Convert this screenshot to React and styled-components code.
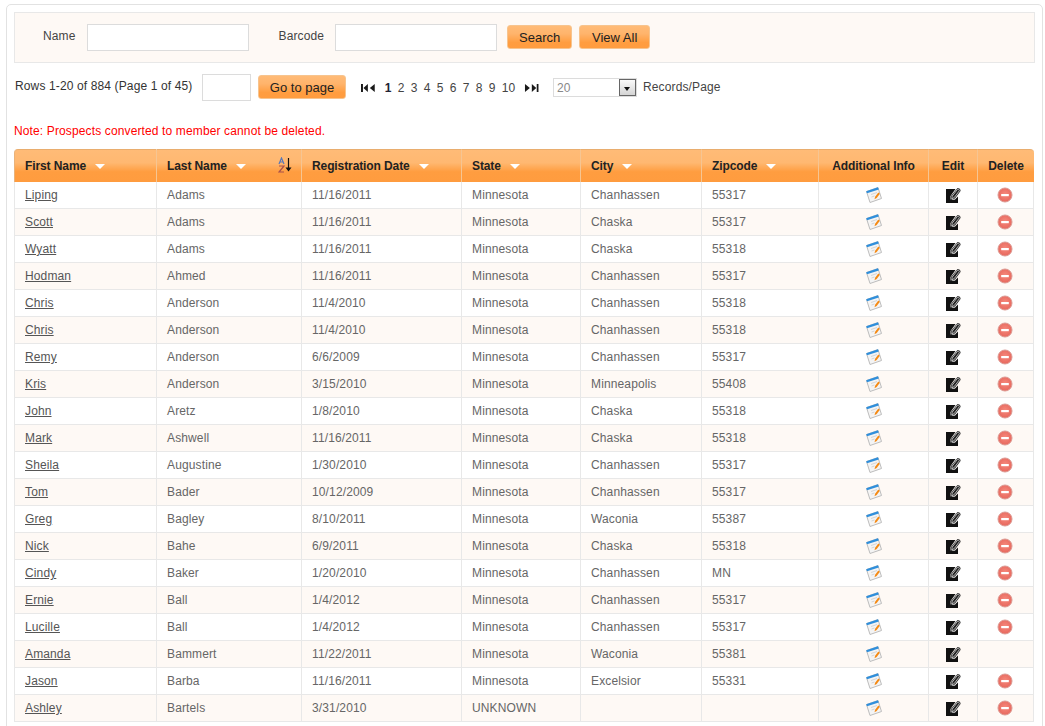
import React from "react";
import styled, { createGlobalStyle } from "styled-components";

const rows = [
  ["Liping", "Adams", "11/16/2011", "Minnesota", "Chanhassen", "55317"],
  ["Scott", "Adams", "11/16/2011", "Minnesota", "Chaska", "55317"],
  ["Wyatt", "Adams", "11/16/2011", "Minnesota", "Chaska", "55318"],
  ["Hodman", "Ahmed", "11/16/2011", "Minnesota", "Chanhassen", "55317"],
  ["Chris", "Anderson", "11/4/2010", "Minnesota", "Chanhassen", "55318"],
  ["Chris", "Anderson", "11/4/2010", "Minnesota", "Chanhassen", "55318"],
  ["Remy", "Anderson", "6/6/2009", "Minnesota", "Chanhassen", "55317"],
  ["Kris", "Anderson", "3/15/2010", "Minnesota", "Minneapolis", "55408"],
  ["John", "Aretz", "1/8/2010", "Minnesota", "Chaska", "55318"],
  ["Mark", "Ashwell", "11/16/2011", "Minnesota", "Chaska", "55318"],
  ["Sheila", "Augustine", "1/30/2010", "Minnesota", "Chanhassen", "55317"],
  ["Tom", "Bader", "10/12/2009", "Minnesota", "Chanhassen", "55317"],
  ["Greg", "Bagley", "8/10/2011", "Minnesota", "Waconia", "55387"],
  ["Nick", "Bahe", "6/9/2011", "Minnesota", "Chaska", "55318"],
  ["Cindy", "Baker", "1/20/2010", "Minnesota", "Chanhassen", "MN"],
  ["Ernie", "Ball", "1/4/2012", "Minnesota", "Chanhassen", "55317"],
  ["Lucille", "Ball", "1/4/2012", "Minnesota", "Chanhassen", "55317"],
  ["Amanda", "Bammert", "11/22/2011", "Minnesota", "Waconia", "55381", true],
  ["Jason", "Barba", "11/16/2011", "Minnesota", "Excelsior", "55331"],
  ["Ashley", "Bartels", "3/31/2010", "UNKNOWN", "", ""],
];

const columns = [
  { label: "First Name", width: 143, arrow: true },
  { label: "Last Name", width: 145, arrow: true, sorted: true },
  { label: "Registration Date", width: 160, arrow: true },
  { label: "State", width: 119, arrow: true },
  { label: "City", width: 121, arrow: true },
  { label: "Zipcode", width: 117, arrow: true },
  { label: "Additional Info", width: 110, center: true },
  { label: "Edit", width: 49, center: true },
  { label: "Delete", width: 56, center: true },
];

const pages = [1, 2, 3, 4, 5, 6, 7, 8, 9, 10];

const NoteIcon = () => (
  <svg width="18" height="18" viewBox="0 0 18 18">
    <path d="M1.5 5.5 13 1.5l3.5 11L5 16.5z" fill="#f4f4f4" stroke="#bdbdbd" />
    <path d="M1.2 5.2 13 1.2l.8 2.2L2 7.2z" fill="#2f8fdc" />
    <path d="M6 8.5l6-2M6.5 11l3-1" stroke="#d5d5d5" />
    <path d="M9.5 13.2l.6-2.4 3.2-4.3 1.6 1.2-3.2 4.3z" fill="#f58a14" />
  </svg>
);

const EditIcon = () => (
  <svg width="15" height="15" viewBox="0 0 15 15">
    <path d="M0 1h9.5L4.5 8v3.5H9l3-3V15H0z" fill="#111" />
    <path d="M11.5 0C13.5 0 15 1.5 14.5 3L9 10.5 4.5 12.5 5 8z" fill="#222" />
    <path
      d="M11.6 1.2c1-.3 2 .6 1.7 1.6L8.4 9.4 5.8 11l.4-2.9zM5.8 11c1 .9 2.6.5 3.6-.3"
      fill="none"
      stroke="#c4c4c4"
      strokeWidth="0.9"
    />
  </svg>
);

const DeleteIcon = () => (
  <svg width="16" height="16" viewBox="0 0 16 16">
    <defs>
      <radialGradient id="del" cx="50%" cy="45%" r="60%">
        <stop offset="0" stopColor="#f5897c" />
        <stop offset="1" stopColor="#e6645a" />
      </radialGradient>
    </defs>
    <circle cx="8" cy="8" r="7" fill="url(#del)" stroke="#dc9a93" />
    <rect x="4.2" y="7" width="7.6" height="2.2" fill="#fff" />
  </svg>
);

const SortIcon = () => (
  <svg width="14" height="16" viewBox="0 0 14 16">
    <path d="M1 7 3.5 1 6 7M2 5h3" fill="none" stroke="#5577bb" strokeWidth="1.2" />
    <path d="M1 9h5L1 15h5" fill="none" stroke="#a8504c" strokeWidth="1.2" />
    <path d="M10.5 1v11" stroke="#111" strokeWidth="1.2" />
    <path d="M7.5 10.5h6l-3 4z" fill="#111" />
  </svg>
);

const PagerArrows = ({ flip }) => (
  <svg width="16" height="8" viewBox="0 0 16 8" style={flip ? { transform: "scaleX(-1)" } : undefined}>
    <path d="M0 0h2v8H0zM7 0v8L2.5 4zM14 0v8L9 4z" fill="#1a1a1a" />
  </svg>
);

const App = () => (
  <>
    <GlobalStyle />
    <Panel>
      <SearchBar>
        <FieldLabel>Name</FieldLabel>
        <TextBox />
        <FieldLabel $gap>Barcode</FieldLabel>
        <TextBox />
        <ActionButton $first>Search</ActionButton>
        <ActionButton>View All</ActionButton>
      </SearchBar>

      <PagerRow>
        <RowCount>Rows 1-20 of 884 (Page 1 of 45)</RowCount>
        <PageInput />
        <ActionButton $wide>Go to page</ActionButton>
        <Pager>
          <PagerArrows />
          <PageNumbers>
            {pages.map((page) => (
              <PageNumber key={page} $active={page === 1}>
                {page}
              </PageNumber>
            ))}
          </PageNumbers>
          <PagerArrows flip />
        </Pager>
        <SelectBox>
          <span>20</span>
          <SelectArrow />
        </SelectBox>
        <RecordsLabel>Records/Page</RecordsLabel>
      </PagerRow>

      <Note>Note: Prospects converted to member cannot be deleted.</Note>

      <Table>
        <colgroup>
          {columns.map((col) => (
            <col key={col.label} width={col.width} />
          ))}
        </colgroup>
        <thead>
          <tr>
            {columns.map((col) => (
              <HeadCell key={col.label} $center={col.center}>
                <HeadInner $center={col.center}>
                  {col.label}
                  {col.arrow && <HeadArrow />}
                  {col.sorted && (
                    <SortMark>
                      <SortIcon />
                    </SortMark>
                  )}
                </HeadInner>
              </HeadCell>
            ))}
          </tr>
        </thead>
        <tbody>
          {rows.map((row, i) => (
            <Row key={i} $alt={i % 2 === 1}>
              <Cell>
                <NameLink href="#">{row[0]}</NameLink>
              </Cell>
              <Cell>{row[1]}</Cell>
              <Cell>{row[2]}</Cell>
              <Cell>{row[3]}</Cell>
              <Cell>{row[4]}</Cell>
              <Cell>{row[5]}</Cell>
              <IconCell>
                <NoteIcon />
              </IconCell>
              <IconCell>
                <EditIcon />
              </IconCell>
              <DeleteCell>{!row[6] && <DeleteIcon />}</DeleteCell>
            </Row>
          ))}
        </tbody>
      </Table>
    </Panel>
  </>
);

export default App;

const GlobalStyle = createGlobalStyle`
  html, body {
    margin: 0;
    overflow: hidden;
    background: #fff;
  }
  body {
    font-family: "Liberation Sans", Arial, sans-serif;
    font-size: 12px;
    letter-spacing: 0.13px;
    color: #444;
  }
`;

const Panel = styled.div`
  width: 1037px;
  box-sizing: border-box;
  margin: 4px 0 0 6px;
  padding: 7px 7px 20px 7px;
  border: 1px solid #e2e2e2;
  border-radius: 5px;
`;

const SearchBar = styled.div`
  display: flex;
  align-items: center;
  width: 1021px;
  height: 51px;
  box-sizing: border-box;
  padding-left: 28px;
  border: 1px solid #e8e8e8;
  background: #fef9f5;
`;

const FieldLabel = styled.label`
  color: #444;
  margin-left: ${(p) => (p.$gap ? "30px" : "0")};
  margin-right: 11px;
  position: relative;
  top: -2px;
`;

const TextBox = styled.input`
  width: 162px;
  height: 27px;
  box-sizing: border-box;
  border: 1px solid #dcdcdc;
  background: #fff;
  outline: none;
`;

const ActionButton = styled.button`
  height: 24px;
  box-sizing: border-box;
  margin: 0 0 2px ${(p) => (p.$first ? "10px" : "7px")};
  padding: 2px 0 0;
  width: ${(p) => (p.$wide ? "88px" : p.$first ? "65px" : "71px")};
  font-family: "Liberation Sans", Arial, sans-serif;
  font-size: 13px;
  color: #222;
  border: 1px solid #f7c48e;
  border-radius: 3px;
  background: linear-gradient(#ffbb77 0%, #ffb46c 35%, #ff9d40 75%, #ff9c3f 100%);
`;

const PagerRow = styled.div`
  display: flex;
  align-items: center;
  height: 27px;
  margin-top: 11px;
  padding-left: 1px;
`;

const RowCount = styled.span`
  width: 187px;
  color: #333;
  position: relative;
  top: -2px;
`;

const PageInput = styled(TextBox)`
  width: 49px;
`;

const Pager = styled.div`
  display: flex;
  align-items: center;
  margin-left: 15px;
  color: #333;
  width: 178px;
`;

const PageNumbers = styled.div`
  display: flex;
  gap: 6.2px;
  margin: 0 8px 0 8px;
`;

const PageNumber = styled.span`
  font-weight: ${(p) => (p.$active ? "bold" : "normal")};
  color: ${(p) => (p.$active ? "#223" : "#444")};
`;

const SelectBox = styled.div`
  display: flex;
  align-items: center;
  justify-content: space-between;
  width: 84px;
  height: 19px;
  margin-left: 14px;
  box-sizing: border-box;
  padding-left: 3px;
  border: 1px solid #dcdcdc;
  color: #888;
  background: #fff;
`;

const SelectArrow = styled.div`
  position: relative;
  width: 17px;
  height: 17px;
  box-sizing: border-box;
  border: 1px solid #666;
  background: linear-gradient(#fafafa, #d4d4d4);
  &::after {
    content: "";
    position: absolute;
    left: 4px;
    top: 7px;
    border-left: 3.5px solid transparent;
    border-right: 3.5px solid transparent;
    border-top: 4px solid #111;
  }
`;

const RecordsLabel = styled.span`
  margin-left: 6px;
  color: #444;
  position: relative;
  top: -1px;
`;

const Note = styled.div`
  margin-top: 23px;
  height: 22px;
  line-height: 14px;
  color: #f00;
`;

const Table = styled.table`
  width: 1020px;
  table-layout: fixed;
  border-collapse: separate;
  border-spacing: 0;
  margin-top: 3px;
`;

const HeadCell = styled.th`
  height: 33px;
  box-sizing: border-box;
  padding: 0 10px;
  font-size: 12px;
  font-weight: bold;
  letter-spacing: -0.1px;
  color: #222;
  text-align: ${(p) => (p.$center ? "center" : "left")};
  border-top: 1px solid #e9ad6e;
  border-right: 1px solid #f6c592;
  background: linear-gradient(#ffbb77 0%, #ffb871 40%, #ff9d40 68%, #ff9c3f 100%);
  &:first-child {
    border-left: 1px solid #e9b27a;
    border-top-left-radius: 4px;
  }
  &:last-child {
    border-right: none;
    border-top-right-radius: 4px;
  }
`;

const HeadInner = styled.div`
  position: relative;
  display: flex;
  align-items: center;
  justify-content: ${(p) => (p.$center ? "center" : "flex-start")};
`;

const HeadArrow = styled.span`
  margin-left: 9px;
  border-left: 5.5px solid transparent;
  border-right: 5.5px solid transparent;
  border-top: 5px solid #fff;
`;

const SortMark = styled.span`
  position: absolute;
  right: -1px;
  top: -2px;
`;

const Row = styled.tr`
  background: ${(p) => (p.$alt ? "#fef9f5" : "#fff")};
`;

const Cell = styled.td`
  height: 27px;
  box-sizing: border-box;
  padding: 0 10px;
  color: #666;
  white-space: nowrap;
  border-right: 1px solid #e8e8e8;
  border-bottom: 1px solid #e8e8e8;
  &:first-child {
    border-left: 1px solid #e8e8e8;
  }
`;

const IconCell = styled(Cell)`
  padding: 0;
  text-align: center;
  svg {
    display: block;
    margin: 0 auto;
  }
`;

const DeleteCell = styled(IconCell)`
  padding-right: 2px;
`;

const NameLink = styled.a`
  color: #555;
  text-decoration: underline;
`;
